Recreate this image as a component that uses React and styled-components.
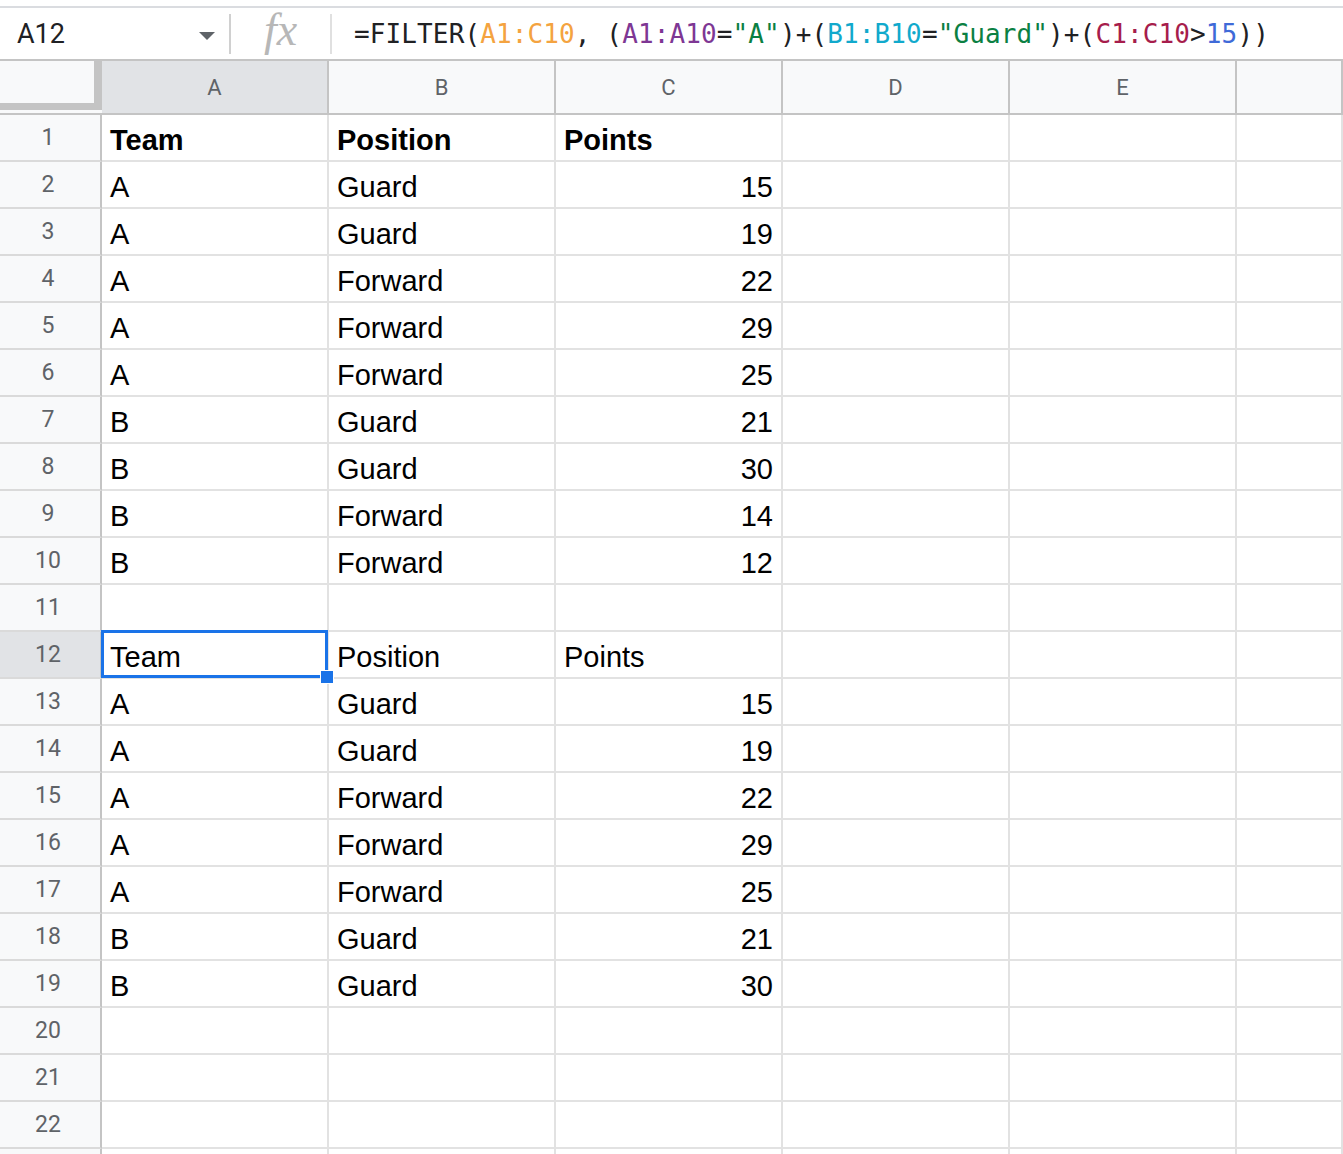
import React from 'react';
import styled, { createGlobalStyle } from 'styled-components';

const GlobalStyle = createGlobalStyle`
  html, body {
    margin: 0;
    padding: 0;
    background: #ffffff;
  }
  body {
    font-family: Roboto, "Liberation Sans", Arial, sans-serif;
  }
`;

const Page = styled.div`
  width: 1343px;
  height: 1154px;
  overflow: hidden;
  background: #ffffff;
  padding-top: 6px;
  box-sizing: border-box;
`;

const FormulaBar = styled.div`
  display: flex;
  align-items: center;
  height: 55px;
  border-top: 2px solid #dadce0;
  border-bottom: 2px solid #c4c4c4;
  box-sizing: border-box;
  background: #fff;
`;

const NameBox = styled.div`
  width: 229px;
  display: flex;
  align-items: center;
  justify-content: space-between;
  padding: 0 14px 0 17px;
  box-sizing: border-box;
  font-family: Roboto, sans-serif;
  font-size: 27px;
  color: #202124;
`;

const Caret = styled.span`
  width: 0;
  height: 0;
  border-left: 8px solid transparent;
  border-right: 8px solid transparent;
  border-top: 8px solid #5f6368;
  margin-top: 4px;
`;

const Divider = styled.div`
  width: 2px;
  height: 40px;
  background: ${({ light }) => (light ? '#e0e0e0' : '#d0d0d0')};
`;

const FxBox = styled.div`
  width: 99px;
  display: flex;
  align-items: center;
  justify-content: center;
  font-family: "Liberation Serif", "DejaVu Serif", serif;
  font-style: italic;
  font-size: 46px;
  color: #b7b7b7;
  padding-bottom: 8px;
  box-sizing: border-box;
`;

const Formula = styled.div`
  padding-left: 22px;
  font-family: "DejaVu Sans Mono", "Liberation Mono", monospace;
  font-size: 26px;
  color: #202124;
  white-space: pre;
  letter-spacing: 0.12px;
`;

const Tok = styled.span`
  color: ${({ c }) => c};
`;

const Grid = styled.div`
  display: grid;
  grid-template-columns: 102px repeat(5, 227px) 1fr;
  grid-auto-rows: 47px;
  grid-template-rows: 54px;
`;

const Corner = styled.div`
  background: #f8f9fa;
  border-bottom: 2px solid #c4c4c4;
  box-sizing: border-box;
`;

const FreezeBars = styled.div`
  height: 49px;
  border-right: 8px solid #c4c4c4;
  border-bottom: 7px solid #c4c4c4;
  box-sizing: border-box;
`;

const ColHead = styled.div`
  display: flex;
  align-items: center;
  justify-content: center;
  background: ${({ active }) => (active ? '#e1e3e6' : '#f8f9fa')};
  border-right: 2px solid #c4c4c4;
  border-bottom: 2px solid #c4c4c4;
  box-sizing: border-box;
  font-family: Roboto, sans-serif;
  font-size: 22px;
  color: #5f6368;
`;

const RowHead = styled.div`
  display: flex;
  align-items: center;
  justify-content: center;
  background: ${({ active }) => (active ? '#e1e3e6' : '#f8f9fa')};
  border-right: 2px solid #c4c4c4;
  border-bottom: 2px solid #dadada;
  box-sizing: border-box;
  font-family: Roboto, sans-serif;
  font-size: 23px;
  color: #5f6368;
  padding-right: 4px;
`;

const Cell = styled.div`
  position: relative;
  display: flex;
  align-items: flex-end;
  justify-content: ${({ num }) => (num ? 'flex-end' : 'flex-start')};
  padding: 0 8px 3px 8px;
  border-right: 2px solid #e2e2e2;
  border-bottom: 2px solid #e2e2e2;
  box-sizing: border-box;
  font-family: "Liberation Sans", Arial, sans-serif;
  font-size: 29px;
  font-weight: ${({ bold }) => (bold ? 700 : 400)};
  color: #000;
  white-space: nowrap;
`;

const Selection = styled.div`
  position: absolute;
  left: -1px;
  top: -2px;
  right: -1px;
  bottom: -1px;
  border: 3px solid #1a73e8;
  pointer-events: none;
`;

const FillHandle = styled.div`
  position: absolute;
  right: -9px;
  bottom: -9px;
  width: 12px;
  height: 12px;
  background: #1a73e8;
  border: 1px solid #fff;
  z-index: 2;
`;

const data = [
  ['Team', 'Position', 'Points', 'b'],
  ['A', 'Guard', 15],
  ['A', 'Guard', 19],
  ['A', 'Forward', 22],
  ['A', 'Forward', 29],
  ['A', 'Forward', 25],
  ['B', 'Guard', 21],
  ['B', 'Guard', 30],
  ['B', 'Forward', 14],
  ['B', 'Forward', 12],
  [],
  ['Team', 'Position', 'Points'],
  ['A', 'Guard', 15],
  ['A', 'Guard', 19],
  ['A', 'Forward', 22],
  ['A', 'Forward', 29],
  ['A', 'Forward', 25],
  ['B', 'Guard', 21],
  ['B', 'Guard', 30],
  [],
  [],
  [],
  [],
];

const cols = ['A', 'B', 'C', 'D', 'E', ''];

const formula = [
  ['=FILTER(', '#202124'],
  ['A1:C10', '#f4a340'],
  [', (', '#202124'],
  ['A1:A10', '#7e3794'],
  ['=', '#202124'],
  ['"A"', '#0b8043'],
  [')+(', '#202124'],
  ['B1:B10', '#11a9cc'],
  ['=', '#202124'],
  ['"Guard"', '#0b8043'],
  [')+(', '#202124'],
  ['C1:C10', '#a61d4c'],
  ['>', '#202124'],
  ['15', '#3f6ad8'],
  ['))', '#202124'],
];

export default function App() {
  return (
    <>
      <GlobalStyle />
      <Page>
        <FormulaBar>
          <NameBox>
            A12
            <Caret />
          </NameBox>
          <Divider />
          <FxBox>fx</FxBox>
          <Divider light />
          <Formula>
            {formula.map(([t, c], i) => (
              <Tok key={i} c={c}>{t}</Tok>
            ))}
          </Formula>
        </FormulaBar>
        <Grid>
          <Corner>
            <FreezeBars />
          </Corner>
          {cols.map((c, i) => (
            <ColHead key={i} active={c === 'A'}>{c}</ColHead>
          ))}
          {data.map((row, r) => {
            const n = r + 1;
            const bold = row[3] === 'b';
            return (
              <React.Fragment key={r}>
                <RowHead active={n === 12}>{n <= 22 ? n : ''}</RowHead>
                {cols.map((c, ci) => {
                  const v = row[ci];
                  return (
                    <Cell key={ci} num={typeof v === 'number'} bold={bold}>
                      {ci < 3 ? v : null}
                      {n === 12 && ci === 0 && (
                        <Selection>
                          <FillHandle />
                        </Selection>
                      )}
                    </Cell>
                  );
                })}
              </React.Fragment>
            );
          })}
        </Grid>
      </Page>
    </>
  );
}
